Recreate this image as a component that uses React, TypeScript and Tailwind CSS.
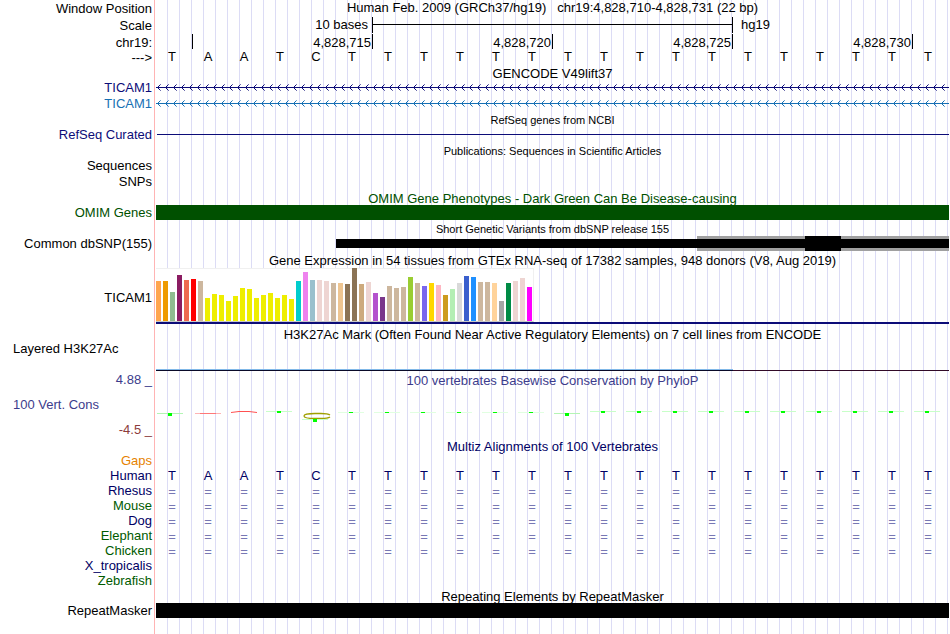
import type { ReactNode } from 'react';
import clsx from 'clsx';

const BASES = 'TAATCTTTTTTTTTTTTTTTTT'.split('');

const POSITIONS = ['4,828,715', '4,828,720', '4,828,725', '4,828,730'];

// [height, color] for each GTEx tissue
const TISSUES: [number, string][] = [
  [40, '#ffa54f'],
  [40, '#ee9a00'],
  [29, '#8fbc8f'],
  [46, '#8b1c62'],
  [41, '#ee6a50'],
  [42, '#ff0000'],
  [40, '#cdb79e'],
  [23, '#eeee00'],
  [27, '#eeee00'],
  [26, '#eeee00'],
  [20, '#eeee00'],
  [25, '#eeee00'],
  [33, '#eeee00'],
  [32, '#eeee00'],
  [23, '#eeee00'],
  [26, '#eeee00'],
  [28, '#eeee00'],
  [23, '#eeee00'],
  [26, '#eeee00'],
  [22, '#eeee00'],
  [40, '#00cdcd'],
  [49, '#ee82ee'],
  [41, '#9ac0cd'],
  [41, '#eed5d2'],
  [40, '#eed5d2'],
  [38, '#cdb79e'],
  [38, '#eec591'],
  [37, '#8b7355'],
  [53, '#8b7355'],
  [37, '#cdaa7d'],
  [39, '#eed5d2'],
  [28, '#b452cd'],
  [24, '#7a378b'],
  [35, '#cdb79e'],
  [33, '#cdb79e'],
  [34, '#cdb79e'],
  [44, '#9acd32'],
  [38, '#cdb79e'],
  [35, '#7a67ee'],
  [38, '#ffd700'],
  [36, '#ffb6c1'],
  [26, '#cd9b1d'],
  [32, '#b4eeb4'],
  [38, '#d9d9d9'],
  [45, '#3a5fcd'],
  [44, '#1e90ff'],
  [39, '#cdb79e'],
  [39, '#cdb79e'],
  [38, '#ffd39b'],
  [20, '#a6a6a6'],
  [38, '#008b45'],
  [40, '#eed5d2'],
  [43, '#eed5d2'],
  [34, '#ff00ff'],
];

const SPECIES = [
  { name: 'Rhesus', color: 'text-[#000064]', aligned: true },
  { name: 'Mouse', color: 'text-[#005a00]', aligned: true },
  { name: 'Dog', color: 'text-[#000064]', aligned: true },
  { name: 'Elephant', color: 'text-[#005a00]', aligned: true },
  { name: 'Chicken', color: 'text-[#005a00]', aligned: true },
  { name: 'X_tropicalis', color: 'text-[#000064]', aligned: false },
  { name: 'Zebrafish', color: 'text-[#005a00]', aligned: false },
];

type RowProps = {
  label?: ReactNode;
  height: string;
  labelClass?: string;
  children?: ReactNode;
};

function Row({ label, height, labelClass, children }: RowProps) {
  return (
    <div className={clsx('flex', height)}>
      <div className={clsx('w-[154px] shrink-0 whitespace-nowrap pr-0.5 text-right', labelClass)}>{label}</div>
      <div className="min-w-0 flex-1 border-l border-[#ffb4b4] pl-px pr-px">
        <div className="h-full bg-[repeating-linear-gradient(to_right,transparent_0_11px,#dcdcf5_11px_12px)]">
          {children}
        </div>
      </div>
    </div>
  );
}

function Title({ children, small, className }: { children: ReactNode; small?: boolean; className?: string }) {
  return (
    <h2 className={clsx('whitespace-pre text-center', small ? 'text-[11px] leading-[17px]' : 'leading-[15px]', className)}>
      {children}
    </h2>
  );
}

function Letters({ letters, className }: { letters: string[]; className?: string }) {
  return (
    <div className={clsx('flex overflow-hidden', className)}>
      {letters.map((letter, i) => (
        <span key={i} className="w-9 shrink-0 pr-1 text-center">
          {letter}
        </span>
      ))}
    </div>
  );
}

// thin transcript line with arrows pointing to the reverse strand
function Transcript({ id, color }: { id: string; color: string }) {
  return (
    <svg className="block h-[15px] w-full" shapeRendering="crispEdges" aria-hidden="true">
      <defs>
        <pattern id={id} width="8" height="15" patternUnits="userSpaceOnUse">
          <path d="M0 7h8v1h-8zM2 6h1v1h-1zM3 5h1v1h-1zM2 8h1v1h-1zM3 9h1v1h-1z" fill={color} />
          <path d="M4 4h1v1h-1zM4 10h1v1h-1z" fill={color} opacity="0.6" />
        </pattern>
      </defs>
      <rect width="100%" height="15" fill={`url(#${id})`} />
    </svg>
  );
}

function Conservation() {
  return (
    <svg className="block h-full w-full" aria-hidden="true">
      {BASES.map((base, i) => {
        if (base !== 'T') return null;
        const x = i * 36 + (i === 0 ? 0 : 1);
        const low = i === 0 || i === 11;
        const flat = i >= 5 && i <= 10;
        const y = low ? 25 : flat ? 24 : 23;
        return (
          <g key={i} shapeRendering="crispEdges">
            <rect x={x + 1} y={y} width="26" height="1" fill={low ? '#b4f5b4' : flat ? '#e1ffe1' : '#c8ffc8'} />
            <rect x={x + 12} y={y} width="4" height={low ? 3 : flat ? 1 : 2} fill="#00ff00" />
          </g>
        );
      })}
      <path d="M39 25.5h26" stroke="#ffb4b4" />
      <path d="M44 25.5h16" stroke="#ff7878" />
      <path d="M75 24.5l8-1h10l8 1" fill="none" stroke="#ff5050" />
      <path d="M174 27c-2-1.500-5-1.500-9-1.500h-6c-8 0-11 1-11 2.500s3 2.500 11 2.500h6c4 0 7 0 9-1.500" fill="none" stroke="#a0a000" strokeWidth="1.300" />
      <rect x="146" y="31" width="26" height="1" fill="#c8ffc8" />
      <rect x="157" y="31" width="4" height="3" fill="#00ff00" />
    </svg>
  );
}

export default function App() {
  return (
    <main className="flex min-h-screen flex-col overflow-x-hidden bg-white font-['Liberation_Sans',Arial,sans-serif] text-[13px] leading-[15px] text-black">
      <Row label="Window Position" height="h-[17px]" labelClass="leading-[17px]">
        <Title>{'Human Feb. 2009 (GRCh37/hg19)   chr19:4,828,710-4,828,731 (22 bp)'}</Title>
      </Row>
      <Row label="Scale" height="h-[17px]" labelClass="leading-[17px]">
        <div className="flex whitespace-nowrap">
          <span className="w-[216px] shrink-0 pr-1 text-right">10 bases</span>
          <div className="h-4 w-[361px] shrink-0 border-x border-black">
            <div className="h-2 border-b border-black" />
          </div>
          <span className="ml-2">hg19</span>
        </div>
      </Row>
      <Row label="chr19:" height="h-4" labelClass="leading-[17px]">
        <div className="flex h-[15px] overflow-x-clip text-right leading-[17px]">
          <span className="w-[37px] shrink-0 border-r border-black" />
          {POSITIONS.map((position) => (
            <span key={position} className="w-[180px] shrink-0 border-r border-black pr-px">
              {position}
            </span>
          ))}
        </div>
      </Row>
      <Row label="--->" height="h-4">
        <Letters letters={BASES} className="leading-[13px]" />
      </Row>

      <Row height="h-3.5">
        <Title>GENCODE V49lift37</Title>
      </Row>
      <Row label="TICAM1" height="h-4" labelClass="text-[#0c0c78]">
        <Transcript id="arrows-navy" color="#0c0c78" />
      </Row>
      <Row label="TICAM1" height="h-4" labelClass="text-[#1670b4]">
        <Transcript id="arrows-blue" color="#1670b4" />
      </Row>

      <Row height="h-[15px]">
        <Title small>RefSeq genes from NCBI</Title>
      </Row>
      <Row label="RefSeq Curated" height="h-4" labelClass="text-[#0c0c78]">
        <div className="ml-px h-2 border-b border-[#0c0c78]" />
      </Row>

      <Row height="h-[15px]">
        <Title small>Publications: Sequences in Scientific Articles</Title>
      </Row>
      <Row label="Sequences" height="h-4" />
      <Row label="SNPs" height="h-[17px]" />

      <Row height="h-3.5">
        <Title className="text-[#005000]">OMIM Gene Phenotypes - Dark Green Can Be Disease-causing</Title>
      </Row>
      <Row label="OMIM Genes" height="h-4" labelClass="text-[#005000]">
        <div className="h-[15px] bg-[#005000]" />
      </Row>

      <Row height="h-[15px]">
        <Title small>Short Genetic Variants from dbSNP release 155</Title>
      </Row>
      <Row label="Common dbSNP(155)" height="h-[17px]">
        <div className="flex h-[15px] items-center pl-[180px]">
          <div className="h-[9px] w-[361px] shrink-0 bg-black" />
          <div className="flex h-full w-[108px] shrink-0 items-center bg-[#a0a0a0]">
            <div className="h-[9px] w-full bg-black" />
          </div>
          <div className="h-full w-9 shrink-0 bg-black" />
          <div className="flex h-full flex-1 items-center bg-[#a0a0a0]">
            <div className="h-[9px] w-full bg-black" />
          </div>
        </div>
      </Row>

      <Row height="h-[15px]">
        <Title>Gene Expression in 54 tissues from GTEx RNA-seq of 17382 samples, 948 donors (V8, Aug 2019)</Title>
      </Row>
      <Row label="TICAM1" height="h-[59px]" labelClass="pt-[22px]">
        <div className="flex h-[54px] w-[378px] items-end gap-0.5 border-b border-r border-t border-[#f0f0f0] border-b-[#c8c8c8] bg-white">
          {TISSUES.map(([height, color], i) => (
            <div key={i} className="w-[5px] shrink-0" style={{ height, backgroundColor: color }} />
          ))}
        </div>
        <div className="h-0.5 bg-[#0c0c78]" />
      </Row>

      <Row height="h-3.5">
        <Title>H3K27Ac Mark (Often Found Near Active Regulatory Elements) on 7 cell lines from ENCODE</Title>
      </Row>
      <Row label="Layered H3K27Ac" height="h-8" labelClass="pl-[13px] !text-left">
        <div className="pt-7">
          <div className="h-px w-[577px] bg-[#80b8e8]" />
          <div className="flex h-px bg-[#320a28]">
            <div className="w-[577px] bg-[#0a0a28]" />
          </div>
        </div>
      </Row>

      <Row label="4.88 _" height="h-[15px]" labelClass="leading-[13px] text-[#3c3c8c]">
        <Title className="text-[#3c3c8c]">100 vertebrates Basewise Conservation by PhyloP</Title>
      </Row>
      <Row
        label={
          <div className="flex flex-col gap-2.5 pl-[13px] pt-[9px]">
            <span className="text-left text-[#3c3c8c]">100 Vert. Cons</span>
            <span className="text-[#8c3c3c]">-4.5 _</span>
          </div>
        }
        height="h-[51px]"
      >
        <Conservation />
      </Row>

      <Row height="h-3.5">
        <Title className="text-[#000064]">Multiz Alignments of 100 Vertebrates</Title>
      </Row>
      <Row label="Gaps" height="h-[15px]" labelClass="text-[#e68200]" />
      <Row label="Human" height="h-[15px]" labelClass="text-[#000064]">
        <Letters letters={BASES} className="text-[#000064]" />
      </Row>
      {SPECIES.map(({ name, color, aligned }) => (
        <Row key={name} label={name} height="h-[15px]" labelClass={color}>
          {aligned && <Letters letters={BASES.map(() => '=')} className="leading-[17px] text-[#7878b4]" />}
        </Row>
      ))}

      <Row height="h-[15px]">
        <Title className="!leading-[17px]">Repeating Elements by RepeatMasker</Title>
      </Row>
      <Row label="RepeatMasker" height="grow">
        <div className="h-[15px] bg-black" />
      </Row>
    </main>
  );
}
